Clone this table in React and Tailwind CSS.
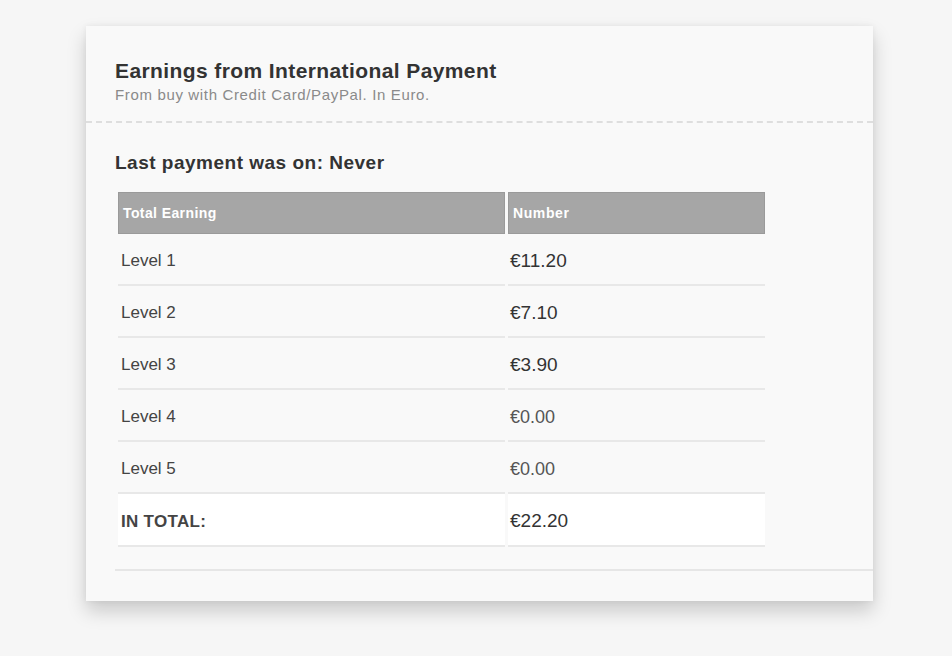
import React from "react";

const rows = [
  { label: "Level 1", value: "€11.20", strong: true },
  { label: "Level 2", value: "€7.10", strong: true },
  { label: "Level 3", value: "€3.90", strong: true },
  { label: "Level 4", value: "€0.00", strong: false },
  { label: "Level 5", value: "€0.00", strong: false },
];

export default function App() {
  return (
    <div
      className="w-[952px] h-[656px] bg-[#f6f6f6] pt-[26px] pl-[86px] overflow-hidden"
      style={{ fontFamily: '"Liberation Sans", Arial, sans-serif' }}
    >
      <div className="w-[787px] h-[575px] bg-[#f9f9f9] shadow-[0_10px_18px_rgba(0,0,0,0.18),0_0_6px_rgba(0,0,0,0.06)]">
        <div className="pl-[29px] pt-[33px] h-[97px] border-b-2 border-dashed border-[#dedede]">
          <h2 className="text-[21px] leading-[24px] font-bold text-[#333] tracking-[0.4px]">
            Earnings from International Payment
          </h2>
          <p className="mt-[3px] text-[15px] leading-[18px] text-[#8a8a8a] tracking-[0.65px]">
            From buy with Credit Card/PayPal. In Euro.
          </p>
        </div>

        <div className="pl-[29px] pt-[29px]">
          <h3 className="text-[19px] leading-[22px] font-bold text-[#333] tracking-[0.5px]">
            Last payment was on: Never
          </h3>
          <div className="ml-[3px] mt-[18px] w-[647px] grid grid-cols-[387px_257px] gap-x-[3px]">
            <div className="h-[42px] bg-[#a6a6a6] border border-[#9a9a9a] flex items-center pl-[4px] text-[14px] font-bold text-white tracking-[0.4px]">
              Total Earning
            </div>
            <div className="h-[42px] bg-[#a6a6a6] border border-[#9a9a9a] flex items-center pl-[4px] text-[14px] font-bold text-white tracking-[0.6px]">
              Number
            </div>
            {rows.map((r) => (
              <React.Fragment key={r.label}>
                <div className="h-[52px] pt-[4px] border-b-2 border-[#e8e8e8] flex items-center pl-[3px] text-[17px] text-[#444]">
                  {r.label}
                </div>
                <div
                  className={
                    r.strong
                      ? "h-[52px] pt-[4px] border-b-2 border-[#e8e8e8] flex items-center pl-[2px] text-[19px] text-[#333]"
                      : "h-[52px] pt-[4px] border-b-2 border-[#e8e8e8] flex items-center pl-[2px] text-[18px] text-[#555]"
                  }
                >
                  {r.value}
                </div>
              </React.Fragment>
            ))}
            <div className="h-[53px] pt-[4px] bg-white border-b-2 border-[#e8e8e8] flex items-center pl-[3px] text-[17px] font-bold text-[#444] tracking-[0.3px]">
              IN TOTAL:
            </div>
            <div className="h-[53px] pt-[4px] bg-white border-b-2 border-[#e8e8e8] flex items-center pl-[2px] text-[19px] text-[#333]">
              €22.20
            </div>
          </div>
          <div className="mt-[22px] border-t-2 border-[#e6e6e6]" />
        </div>
      </div>
    </div>
  );
}
